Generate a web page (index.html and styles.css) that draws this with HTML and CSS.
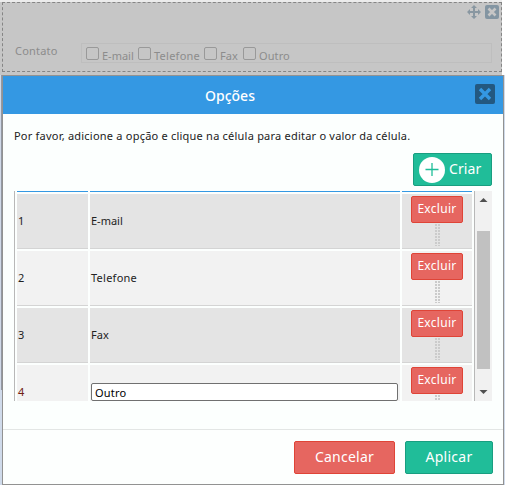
FILE: index.html
```html
<!DOCTYPE html>
<html lang="pt">
<head>
<meta charset="utf-8">
<title>Opções</title>
<link rel="stylesheet" href="styles.css">
</head>
<body>
<main class="page">
  <section class="field-block">
    <div class="tools">
      <svg width="14" height="14" viewBox="0 0 14 14"><path d="M7 0l3 3H8v3h3V4l3 3-3 3V8H8v3h2l-3 3-3-3h2V8H3v2L0 7l3-3v2h3V3H4z" fill="#8997a1"/></svg>
      <svg width="14" height="14" viewBox="0 0 14 14"><rect width="14" height="14" rx="2" fill="#8395a2"/><path d="M3.500 3.500l7 7M10.500 3.500l-7 7" stroke="#c6c6c6" stroke-width="2.600"/></svg>
    </div>
    <div class="field-row">
      <span class="field-label">Contato</span>
      <div class="choices">
        <i class="box"></i><span class="c1">E-mail</span>
        <i class="box"></i><span class="c2">Telefone</span>
        <i class="box"></i><span class="c3">Fax</span>
        <i class="box"></i><span class="c4">Outro</span>
      </div>
    </div>
  </section>
  <section class="modal">
    <header class="modal-head">
      <h1>Opções</h1>
      <svg class="close" width="20" height="20" viewBox="0 0 20 20"><rect width="20" height="20" rx="2" fill="#235880"/><path d="M5 5l10 10M15 5l-10 10" stroke="#3498e3" stroke-width="3.400"/></svg>
    </header>
    <div class="modal-body">
      <p class="hint">Por favor, adicione a opção e clique na célula para editar o valor da célula.</p>
      <div class="toolbar">
        <button class="btn green create"><svg width="26" height="26" viewBox="0 0 26 26"><circle cx="13" cy="13" r="13" fill="#fff"/><path d="M6.500 12.500h13M13 6v13" stroke="#20bd99" stroke-width="1.300"/></svg><span>Criar</span></button>
      </div>
      <div class="scroller">
        <div class="grid">
          <b class="rule"></b><b class="rule"></b><b class="rule"></b>
          <div class="cell odd">1</div><div class="cell odd">E-mail</div><div class="cell odd action"><button class="btn red small">Excluir</button><i class="grip"></i></div>
          <div class="cell">2</div><div class="cell wide">Telefone</div><div class="cell action"><button class="btn red small">Excluir</button><i class="grip"></i></div>
          <div class="cell odd">3</div><div class="cell odd">Fax</div><div class="cell odd action"><button class="btn red small">Excluir</button><i class="grip"></i></div>
          <div class="cell four">4</div><div class="cell"><input class="edit" value="Outro"></div><div class="cell action"><button class="btn red small">Excluir</button><i class="grip"></i></div>
        </div>
        <div class="bar">
          <svg width="17" height="17" viewBox="0 0 17 17"><path d="M4.500 11h8l-4-4z" fill="#505050"/></svg>
          <i class="thumb"></i>
          <svg width="17" height="17" viewBox="0 0 17 17"><path d="M4.500 6h8l-4 4z" fill="#505050"/></svg>
        </div>
      </div>
    </div>
    <footer class="modal-foot">
      <button class="btn red cancel">Cancelar</button>
      <button class="btn green apply">Aplicar</button>
    </footer>
  </section>
</main>
</body>
</html>
```
FILE: styles.css
```css
* { box-sizing: border-box; }
body { margin: 0; background: #cfdaea; font: 11px/16px "Noto Sans", sans-serif; color: #222; }
.page { width: 505px; height: 485px; overflow: hidden; background: linear-gradient(#fff 0 75px, transparent 75px), linear-gradient(90deg, #d0d9e8 0 1px, #9499a3 1px 3px, transparent 3px); background-size: 100% 75px, 100% 390px; background-repeat: no-repeat; }
.field-block { width: 502px; height: 75px; padding: 2px 0 0 2px; background: linear-gradient(#ececec 0 2px, #c6c6c6 2px); display: flex; flex-direction: column; position: relative; }
.field-block::after { content: ""; position: absolute; inset: 2px 0 3px 2px; border: 1px dashed #858585; }
.tools { display: flex; justify-content: flex-end; gap: 4px; padding: 3px 3px 0 0; height: 41px; }
.field-row { display: flex; height: 20px; color: #8c8c8c; }
.field-label { width: 79px; padding-left: 13px; letter-spacing: .2px; }
.choices { width: 411px; height: 20px; border: 1px solid #bebebe; display: flex; padding: 3px 0 0 4px; }
.box { width: 13px; height: 13px; border: 1px solid #999; border-radius: 2px; margin-right: 3px; flex: none; }
.choices span { padding-top: 1px; white-space: nowrap; }
.c1 { width: 36px; } .c2 { width: 50px; letter-spacing: .25px; } .c3 { width: 23px; } .c4 { letter-spacing: .1px; }
.modal { width: 502px; height: 410px; margin-left: 2px; border: 1px solid #929292; background: #fcfffe; display: flex; flex-direction: column; }
.modal-head { height: 38px; flex: none; background: #3498e3; display: flex; align-items: center; padding-right: 8px; }
h1 { flex: 1; margin: 2px 0 0 -18px; text-align: center; font-size: 14px; font-weight: 500; color: #fff; }
.close { margin-top: -2px; }
.modal-body { height: 316px; flex: none; padding: 14px 11px 0; border-bottom: 1px solid #e3e6e5; }
.hint { margin: 0; height: 25px; white-space: nowrap; letter-spacing: .22px; }
.toolbar { display: flex; justify-content: flex-end; height: 38px; }
.btn { font: 14px/20px "Noto Sans", sans-serif; color: #fff; border: 1px solid; border-radius: 2px; padding: 0; }
.green { background: #20bd99; border-color: #189e80; }
.red { background: #e66660; border-color: #df4437; }
.create { width: 79px; height: 33px; display: flex; align-items: center; padding-left: 5px; gap: 4px; }
.create span { margin-top: -2px; letter-spacing: .1px; }
.scroller { width: 478px; height: 210px; overflow: hidden; display: flex; }
.grid { width: 461px; flex: none; display: grid; grid-template-columns: 71px 310px 70px; grid-template-rows: 1px repeat(4, 55px); gap: 2px; border: solid #b8b8b8; border-width: 0 1px; padding: 0 2px; }
.rule { background: #3498e3; }
.cell { background: #f2f2f2; border-bottom: 1px solid #d4d4d4; display: flex; align-items: center; padding-left: 1px; overflow: hidden; }
.wide { letter-spacing: .25px; }
.odd { background: #e4e4e4; }
.four { color: #702010; }
.action { flex-direction: column; align-items: center; padding: 2px 0 0; }
.small { width: 52px; height: 27px; font-size: 12px; letter-spacing: .3px; flex: none; padding-bottom: 1px; }
.grip { width: 5px; height: 23px; background: repeating-linear-gradient(transparent 0 1px, #cbcbcb 1px 3px); clip-path: polygon(0 0, 2px 0, 2px 100%, 3px 100%, 3px 0, 5px 0, 5px 100%, 0 100%); margin-left: 1px; }
.edit { width: 307px; height: 18px; margin: 0; padding: 0 3px; border: 1px solid #707070; border-radius: 2px; font: 11px "Noto Sans", sans-serif; letter-spacing: .2px; background: #fff; }
.bar { width: 17px; background: #f1f1f1; display: flex; flex-direction: column; align-items: center; justify-content: space-between; }
.thumb { width: 13px; height: 138px; background: #c1c1c1; margin-top: 23px; margin-bottom: 15px; }
.modal-foot { flex: 1; display: flex; justify-content: flex-end; gap: 10px; padding: 11px 10px 0; background: #fdfffe; }
.modal-foot .btn { height: 33px; padding-bottom: 2px; letter-spacing: .25px; }
.cancel { width: 101px; } .apply { width: 88px; }
```
